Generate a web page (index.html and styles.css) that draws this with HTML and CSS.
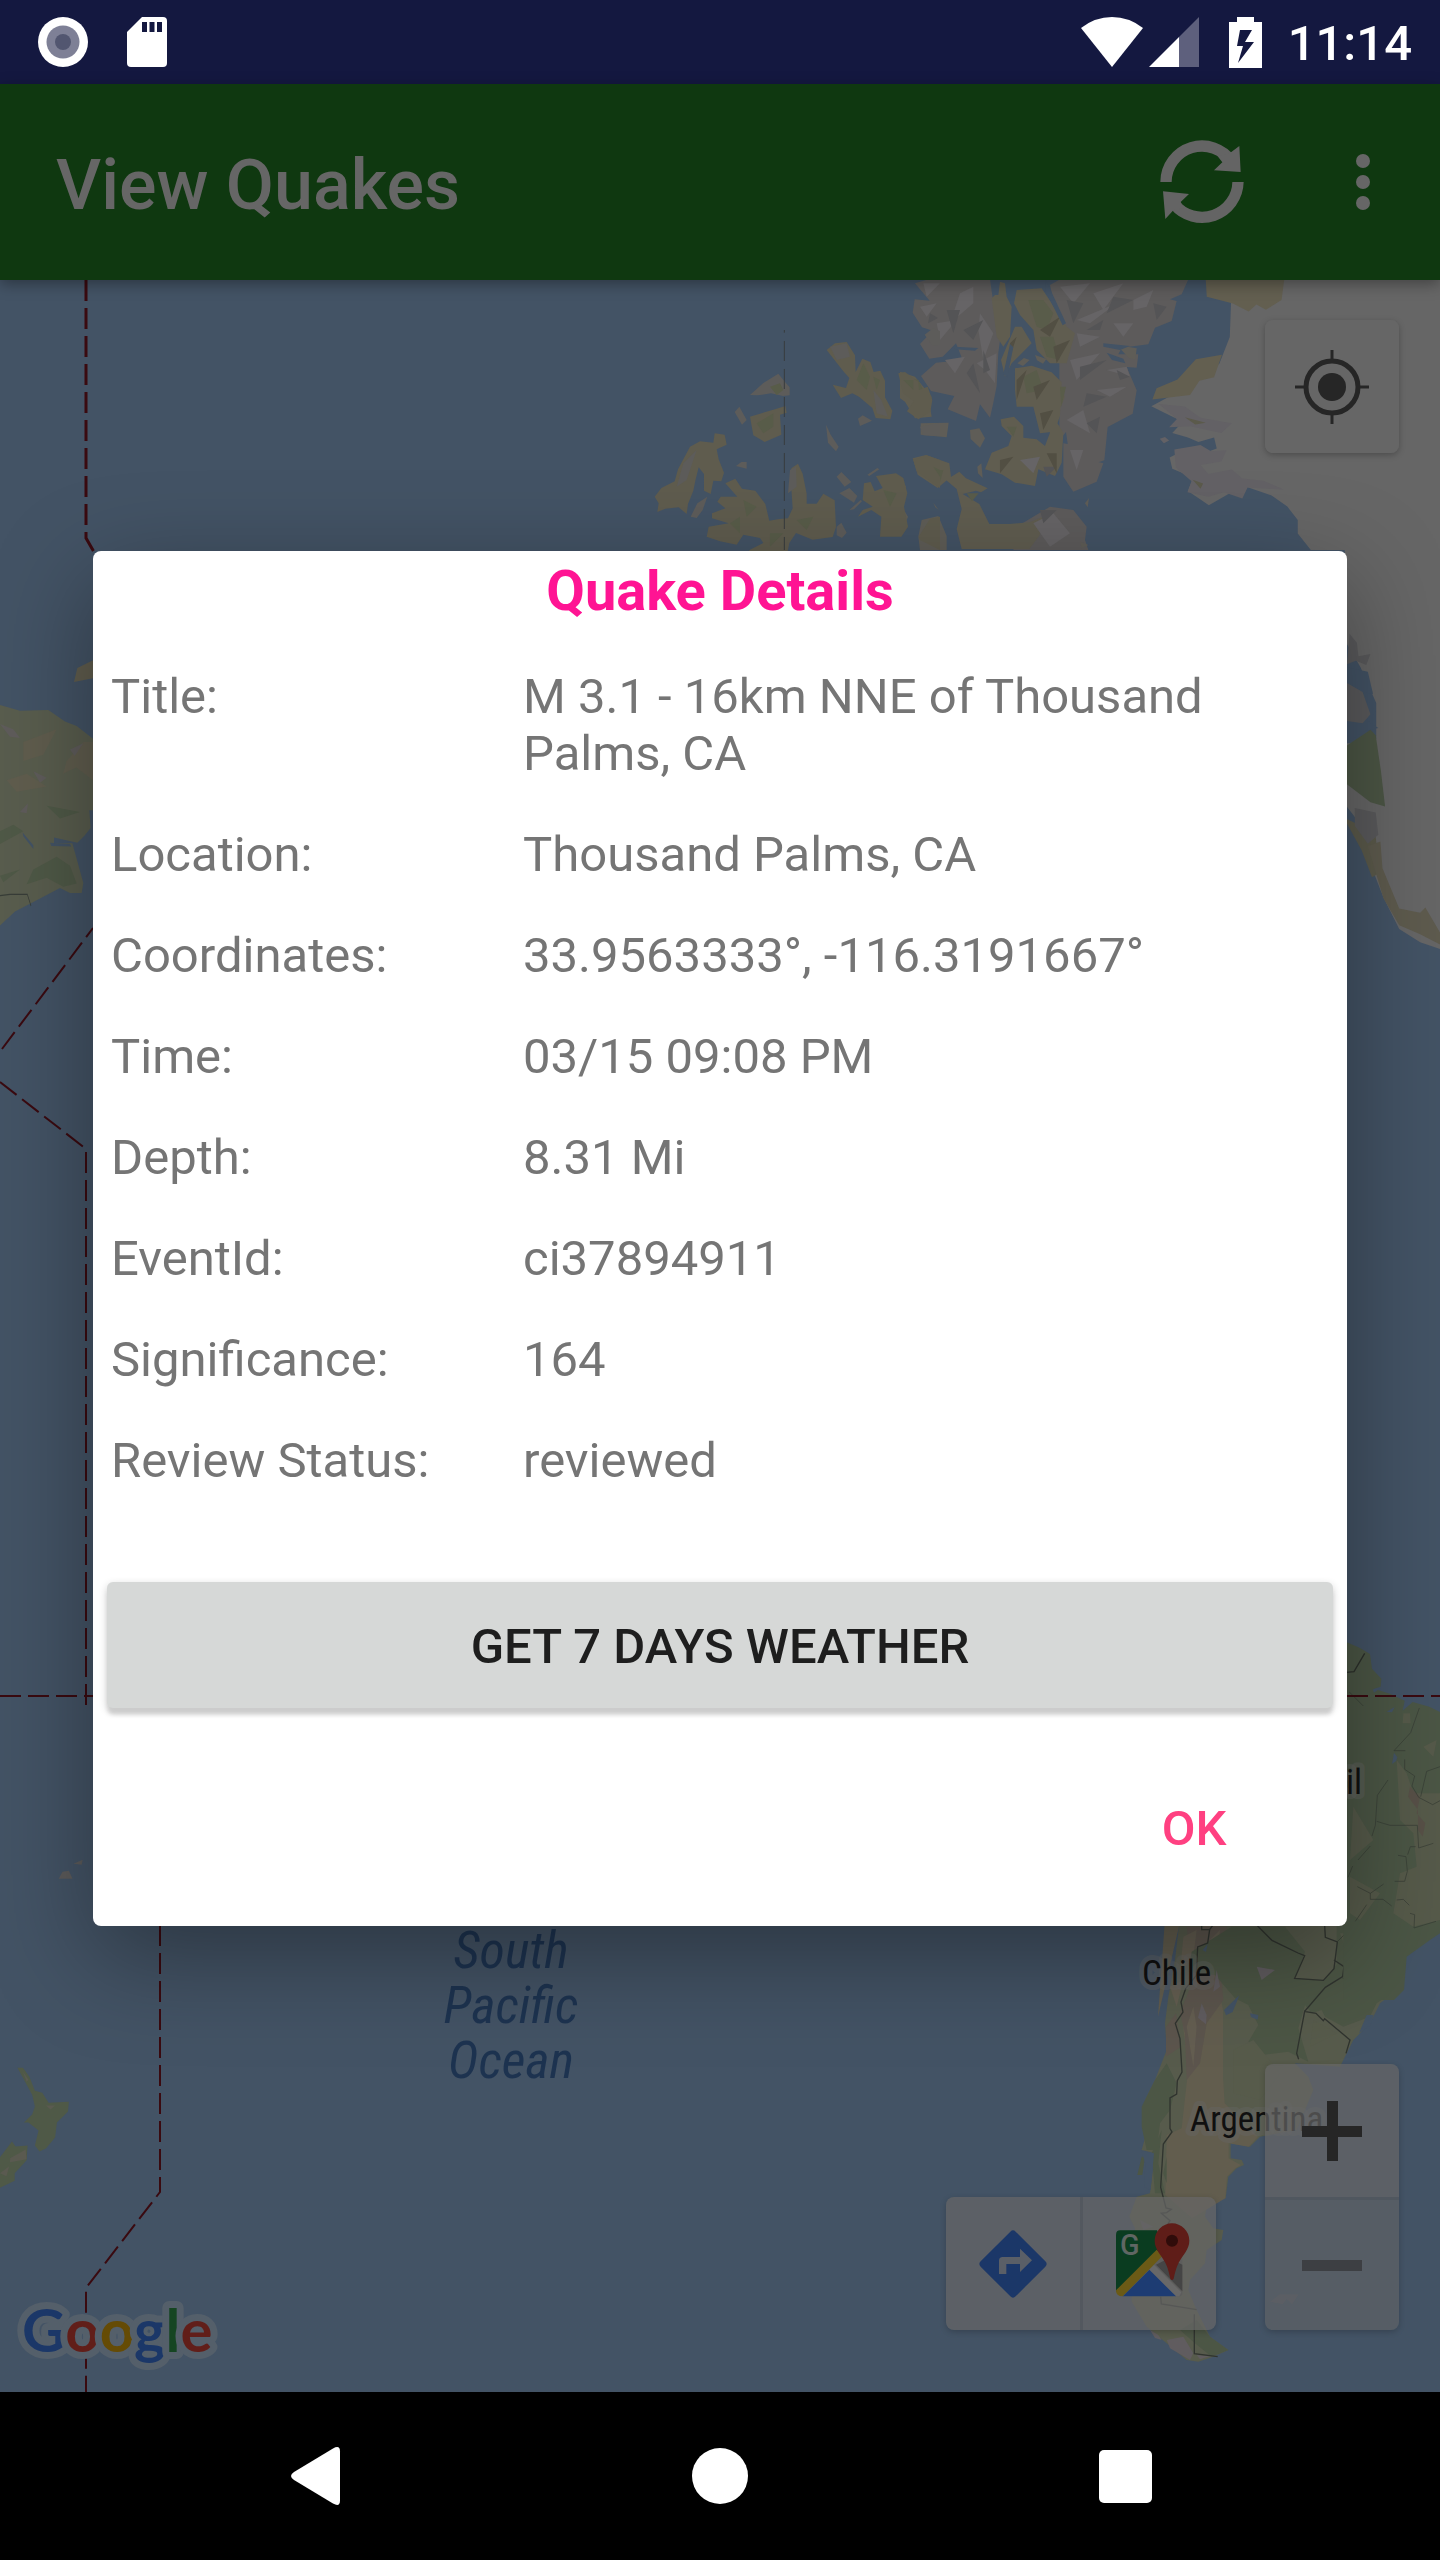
FILE: index.html
```html
<!DOCTYPE html>
<html lang="en">
<head>
<meta charset="utf-8">
<meta name="viewport" content="width=device-width, initial-scale=1">
<title>View Quakes</title>
<link rel="stylesheet" href="styles.css">
</head>
<body>
<div class="status-bar">
  <div class="status-group status-left">
    <svg class="icon-sync" viewBox="0 0 50 50" aria-hidden="true"><circle cx="25" cy="25" r="25" fill="#fff"/><circle cx="25" cy="25" r="16.500" fill="#7e8096"/><circle cx="25" cy="25" r="8" fill="#525670"/></svg>
    <svg class="icon-sd" viewBox="0 0 40 50" aria-hidden="true"><path fill="#fff" d="M15 0h21a4 4 0 0 1 4 4v42a4 4 0 0 1-4 4H4a4 4 0 0 1-4-4V15z"/><path fill="#141840" d="M15 5h5v10h-5zM22.500 5h5v10h-5zM30 5h5v10h-5z"/></svg>
  </div>
  <div class="status-group status-right">
    <svg class="icon-wifi" viewBox="0 0 62 50" aria-hidden="true"><path fill="#fff" d="M0 11Q14 0 31 0t31 11L31 50z"/></svg>
    <svg class="icon-signal" viewBox="0 0 50 50" aria-hidden="true"><path fill="#5e607d" d="M30 20L50 0v50H30z"/><path fill="#fff" d="M0 50l30-30v30z"/></svg>
    <svg class="icon-battery" viewBox="0 0 33 51" aria-hidden="true"><path fill="#fff" d="M8 0h17v5h8v46H0V5h8z"/><path fill="#141840" d="M11 13h12l-7 12h9L9 46l5-17H8z"/></svg>
    <time class="clock">11:14</time>
  </div>
</div>

<div class="screen">
  <header class="app-bar">
    <h1 class="app-title">View Quakes</h1>
    <button class="icon-button" type="button" aria-label="Refresh">
      <svg class="icon-refresh" viewBox="350 412 270 268"><g fill="none" stroke="#646464" stroke-width="34"><path d="M377 546A108 108 0 0 1 574 485"/><path d="M593 546A108 108 0 0 1 402 613"/></g><path fill="#646464" d="M597 438l4 78-80-5 25-24-14-18 40-12zM368 574l78 8-25 24 10 18-32 7-24 26z"/></svg>
    </button>
    <button class="icon-button" type="button" aria-label="More options">
      <svg class="icon-more" viewBox="0 0 14 56"><g fill="#666"><circle cx="7" cy="7" r="7"/><circle cx="7" cy="28" r="7"/><circle cx="7" cy="49" r="7"/></g></svg>
    </button>
  </header>

  <main class="map">
    <svg class="map-canvas" viewBox="0 280 1440 2112" preserveAspectRatio="xMidYMid slice" aria-hidden="true">
      <rect y="280" width="1440" height="2112" fill="#435365"/>

      <!-- Greenland -->
      <g transform="translate(620 270) scale(.52297 .44643)">
        <path fill="#666" d="M1170 20H1570V1522l-40-16-40-30-30-70-20-60-18-40-10-70-26-40V1060h40l20-10v-80l-30-80-30-60V627h-65l-25-37v-30l-20-30-30-25-50-20-30 15-40 27-40-32 10-30-40-20-5-25 20-12 35 7 35-15-5-25-30 10-20-10-30-10 20-25-35-20-25-15 80-50 50-45 20-60z"/>
        <path fill="#635f50" d="M1120 22h150l-5 45-30 22-18-12-15 16-30-18-50-15zM1018 290l8-25 40-20 35-45 50-10-15 50-28 8-18 32z"/>
        <path fill="#636165" d="M1030 300l50 6 30 25 60 12-20 22-60-15-40 2 15-18zM1060 402l50-10 20 14 30-2-10 25-40 8 15 20 45-10 20 20 40 5 40 20-70-5-10 25-35-14-30 10-40-10 8-25-30-30zM1032 378l10-4 8 8-10 6z"/>
        <path fill="#5b5a4b" d="M1080 330l40 12-20 4zM1095 470l20 8-5 12zM1390 1230l35 20 20 20 8 80-15 10-20-60-28-60z"/>
        <path fill="#4c5645" d="M1390 1065l45-35 10 12 10 80 8 80-28-10-45-40z"/>
        <path fill="#5e5b4e" d="M1430 1290l24-10 4 60 32 90 40 10 10-12 30 60v24l-40-24-40-20-30-60z"/>
        <path fill="#435365" d="M1390 890l40 10 10 50-20-5 25 45-15 20 20 16-30 8-30 26z"/>
        <path fill="#5a5a5c" d="M1390 925l30 20 15 50-15 20-30-5zM1395 815l14 20 3 30 23-5-8 25-20-10-17 8zM1405 1205l40 10 5 50-20 20-25-40z"/>
      </g>

      <!-- Ellesmere, Axel Heiberg, Devon -->
      <g transform="translate(900 280) scale(.33333)">
        <path fill="#5d5b5b" d="M45 10l40-12h185l10 70 30 40-15 110-5 100-10 50-10 45-30-40-12 50-85-35 20-40-70-15-30-45 45-40 80-8-20-50-40 40-40 6-28-44 38-40-32-10-28-44 6-40 45 4zM450 15l30-17h385l-20 45-35 15 20 5-15 60-50 20-20 50-80 10-10 20 60 0-5 40-30-2 30 70-12 70-75 40-10 100-60 20-45-35-10-70-20 25 0-300-10-85zM490 490l85 15-5 35 40 10-20 55-70 30-30-45zM350 740l100-60 70 10 40 50-5 40 10 30H340z"/>
        <path fill="#605d50" d="M350 30l75-5 40 60 35 55 25 20-25 90-50 0-40-40-10-60-40-45-18-35zM300 5l15 5 5 40 15 30-5 90-20 30-20-30-15-115 10-10 10 0zM345 140l20 0 30 50-60 60-20 40-12-50zM345 265l50-8 60 20 30 30-5 100-10 30-10 18-40 5-20-80-50 0-5-50zM480 330l15 20-25 60-10 10zM302 418l40-8 28 28 0 35 40 5 25 20 30-80 25 40-5 90-20 40-50-20-10 50-60-10-40-25-50-15 20-50 50-20 10-30-30-30zM38 535l40-10 70 25 5 40-40 34-60-40zM0 275l45 15 50 60-5 30 5 30-50 5-30-50-15-10zM138 600l40-25 20 20 65 30-20 12-15-5-40 10 50 30 30 60 60 0 60-5 50-20-20 60-30 40H185l-15-60 15-60-15-60z"/>
        <path fill="#5f5d57" d="M62 430l84-2-6 44-78-8zM210 450l28-5 17 30-15 28-28-26zM232 560l12-10 4 44-14-14zM55 770l10-50 50-12 25 60 0 42H60zM0 590l18 30-12 60 18 30-24 60zM352 250l20-16 17 6-20 18zM405 225l34 12-10 14-18-10zM555 670l12-16-4 28zM540 785l25 10-20 10zM100 668l16 22-10-8zM650 195l60 10-4 34-20-6z"/>
        <path fill="#595c4a" d="M385 60l45 0 30 40-20 50-30-10zM420 170l40 0 20 70-40-10zM370 290l40-20 20 60-50 10zM5 290l50 10 20 40-40 10zM320 440l30 0-10 30zM90 570l40 0-10 36zM200 640l36 0-20 24zM480 320l18 0-14 60z"/>
        <path fill="#666466" d="M70 10l50 0-40 40zM180 40l40-20 0 50-70 60zM60 80l50-10-30 40zM110 130l60-10-50 60zM240 100l40 60-30 80-15-90zM135 240l60-10-30 50zM230 250l60-30-5 90-30-40zM480 20l90-10-50 60zM580 40l90-30-60 80zM700 60l60-30-20 50-40 10zM530 120l120-50-80 60zM530 160l70 10-60 30zM640 130l60 0-30 40zM510 240l90-20-70 80zM590 330l90-10-50 30zM620 270l60-10 10 30zM500 420l50-30 20 70zM360 540l60-10-20 50zM510 510l40 0-20 60zM400 730l60-30 50 60-60 40z"/>
        <path fill="#545456" d="M140 90l40 0-20 70zM190 150l60-30-30 60zM200 280l20-30 20 90zM250 210l20 60-20 10zM500 60l50 10-30 60zM640 50l60 10-80 40zM560 150l50-30-10 30zM540 260l80-20-80 60zM560 340l60 10-70 30zM650 270l40 20-30 10zM560 430l40-20-10 50zM430 560l40 0-30 30zM760 70l40 10-30 40zM90 100l24 14-30 16zM420 690l50 0-40 40z"/>
        <path fill="#524f43" d="M420 150l60-40-30 60zM460 200l50-20-40 70zM350 300l30-30-30 90zM400 320l50-20-40 60zM420 400l40-10-30 60zM300 540l40-10-40 50zM440 520l30 0 0 60zM330 190l20-20-20 60z"/>
        <path fill="#435365" d="M165 200l70 4-10 8-60-4zM310 282l20-90 10 10-18 90zM438 0l60 130-10 6-50-100zM610 190l80 8-30 12-50-10zM620 218l50 18 6 14-40-10z"/>
      </g>

      <!-- Parry islands -->
      <g transform="translate(640 330) scale(.33333)">
        <path fill="#5f5c4e" d="M150 350l30-16 40 4 4-28 30 4 6 30-30 14 6 30 16 40-8 26-24-2-8 40-20-10 0-50-16-20-10 40-6 30-16 40-4 30-24-20-40 4-24 10 4-26-12-20 20-26 40-20 10-36zM256 460l30-14 20 30 40 6 30 40 12 50 30-5 26-2 14-30-4-60 0-60 20-14 14 30 12 60 0 30 30 0 20-30 34 20 4 80-10 30-60 8-50-20-20 30-10 50H300l30-30 40-20-10-15-50-10-20 30-50-10-40-14 6-30 60-10-50-15 0-15 40-15-24-20 10-15 50 0zM330 260l80-24 26-8 4 20-20 6 4 60-50 22-34-20zM560 60l25-20 35-4 25 40 2 50 20-40 24 10 10 30 20-4 14 30 0 50 22 40-6 26-44-4-10-30-40-34-20-10-34 14-25-40 40 10 10-30-18-20zM775 130l20-4 40 30 2 24 26-10 14 40-6 36-36 22-34-24 20-30-32-24zM820 390l40-14 40 14v84l-30-20-40-30zM836 620l34-54 30-6v100l-60-30zM720 620l4-60-30-20-40 20 14-20 30-10-30-20 4-50 20-4 12 28 24-10-20-36 60-8 22 14 12 46-10 40 12 60-20 30z"/>
        <path fill="#5d5c5a" d="M330 195l40-36 45-28 20 25 14 16 0 24-20 2-36-8-40 6zM284 246l14-16 22 40-14 14zM288 408l16-12h16v20zM590 440l14-14 30 30-20 14zM598 490l30-16 24 24-10 20zM682 434l30-20 6 4-30 20zM628 540l34-30 4 4-24 24zM590 590l14-12 16 30-14 16-16-8zM152 560l20-40 30-20-14 40-18 24zM654 266l14-10 28 16-36 16zM558 284l14 30 24 36-8 14-24-26zM840 290l60-12v40l-50-2zM854 14l26-20 20 10v40l-22 4zM130 400l40-40-30 90-30 20zM570 50l50-10 10 40-40 10zM700 180l24 30 20 50-34-10zM450 420l18-10 2 60-26 20z"/>
        <path fill="#585c49" d="M390 170l30-10 10 20-20 15zM350 280l50-30 0 40-30 20zM650 150l20-50 20 40-10 40zM700 140l20 10-10 30zM790 150l30 0 0 30zM310 510l40 20-30 30zM470 570l50-10-20 40zM730 480l40 10-20 40zM270 580l30-20 0 50zM880 410l20 10v20zM390 610l40 0-40 40z"/>
        <path stroke="#383b3e" stroke-width="3" stroke-dasharray="60 24" d="M433 33V660M433 0v8"/>
      </g>

      <!-- Siberia -->
      <g transform="translate(0 270) scale(.33333 .63776)">
        <path fill="#595d4e" d="M0 682l60 9 85-1 50 18 35 7 49 20v112l-11 0 4 28-20 13-20 10-70-8 0 9 55 0 13 24 20 38-5 16-35 0-30-8-80 22-55 15-45 22z"/>
        <path fill="#605d4e" d="M222 646l10-22 47-12v28zM70 740l100-20-40 40-60 10zM200 770l50-30 29 0v60l-50-20-40 10zM20 800l60-10 60 20-90 8z"/>
        <path fill="#5f5c5b" d="M0 712l40 8 20 14-30-2zM100 786l40 10-20 8zM210 752l40-10-26 20zM60 850l24-14-4 16z"/>
        <path fill="#4f5947" d="M0 880l40-10 30 10-70 20zM100 940l70-20 40 14 20 28-40 5-50-14-60 10zM0 950l60-10-50 20zM140 840l100 10-60 10z"/>
        <path fill="#435365" d="M68 882l32 20 0 6-30-20zM150 898l60 2 4 4-60-1z"/>
        <path fill="none" stroke="#383d38" stroke-width="2" d="M0 981l30-2h52l11 18"/>
      </g>

      <!-- New Zealand and Fiji -->
      <g transform="translate(0 1640) scale(.45918 .49745)">
        <path fill="#4f5947" d="M38 860l12 0 14 18 12 28 16 4 14 20 44-2-2 20-24 22-4 30-20 22-14 6-10-12 8-30-22-16-10 0 18-16 6-16-6-24zM0 1040l26-32 8 10 26-2-2 30-26 26 0 15-34 15z"/>
        <path fill="#5a5a50" d="M22 1042l34-18 2 20-36 6zM0 1072l20-14-6 20zM50 868l12 16-4 4zM100 936l20 0-10 8z"/>
        <path fill="#5b5a5a" d="M128 480l8-14 14-2 8 16zM160 450l20-8-2 10z"/>
      </g>

      <!-- South America, southern half -->
      <g transform="translate(920 1900) scale(.33333)">
        <path fill="#575b4c" d="M778 70L765 180 745 290 735 370 740 450 705 540 675 600 690 660 665 750 705 760 690 880 650 890 628 950 645 985 635 1205 680 1280 740 1330 800 1380 835 1385 880 1370 925 1350 870 1310 830 1230 805 1170 810 1140 855 1090 860 1050 905 1020 910 990 880 985 855 950 860 920 888 898 917 895 925 830 950 805 972 795 965 780 932 775 932 730 990 740 1020 710 1130 690 1180 570 1165 530 1125 490 1260 500 1300 420 1350 370 1380 310 1420 280 1425 180 1440 155 1480 125 1560 92V-10H1270L1280 70z"/>
        <path fill="#625d4e" d="M778 75h75l-20 120-30 90-18 60 20 160-20 180-45 20-4 180 80 70 100-60 5-65 25-25 16-10-36-20 0-45 60 10 28-30-60-60-40-40-5-80V330l-20-110 10-145-70-5-95 0-20 280z"/>
        <path fill="#5c554d" d="M800 80h120l-15 160 5 60-50 70-20 120-40 50-5-140-15-60 40-100zM738 380l30-40 15 100-45 30z"/>
        <path fill="#645e51" d="M790 110l40-20-10 80-40 50zM870 120l30-30-10 100zM800 380l20-60 10 60-10 120zM750 260l40-20-20 80z"/>
        <path fill="#4c5645" d="M935 80h160l60 75-30 80 85 8 40-50V75h300v20l-120 60-10 120-50 35-20 40-80 30-55-30-10-20-30 10-20-25-20 70 30 100-60-30-80 10-40-40 30-50-30-60-40-20-60-70-80-10 10-60zM705 540l35-50 30 60-20 80-30 40-10 80-30 0-15-70 0-60zM725 690l-10 100 20 90-30 0-10-120zM780 1290l50-30 40 50 55 40-50 20-50-40zM665 770l10 0-8 55-15 0zM740 770l0 80-10-30z"/>
        <path fill="#435365" d="M912 330l46-44-20 50-20 10zM990 340l25 5-2 14-20-8zM848 150l15-18-5 24zM1340 345l20 0-8 30-35 25zM664 752l38 8-10 110-20-10 4-70z"/>
        <path fill="#605c5f" d="M845 310l15 35-2 28-24-20zM740 1320l50-10 30 50-10 20-60-35zM1010 200l55 10-40 30zM690 1290l25 15 10 15-20-6zM1350 290l40-10-20 20zM890 210l10 50-20 15zM660 960l40 20-30 10zM830 1365l40 3-30 10z"/>
        <path fill="#575b4b" d="M940 450l60-30 80 100-60 80-80-20zM1180 360l70 40-80 40zM1260 100l130 0 20 90-100 40zM1460 10l80 30-60 50z"/>
        <g fill="none" stroke="#30342f" stroke-width="4">
          <path d="M845 75v14l24 0 10-14M869 89l-6 40-30 12-4 85-32 40-14 40 6 30-23 34 14 46 6 100-14 26-2 40-20 12v92l6 10-26 36-8 130 16 62 16 4-14 10-16 2 26 22-20 32-4 50M722 1190l2 22 106 17M823 1243v118l70 9M1010 75l46 46 78 38 20 8-30 68 86 6 32-35 10-80-36-14-2-36M1242 180l30 20-4 30-52 32-62 72-24 126 6 18M1152 334l36 6 22 22 4-6 76 64-12 40"/>
        </g>
        <path fill="none" stroke="#353b33" stroke-width="2" d="M1252 125l40-40 80 4 20 14 10 40 34 26M1340 14l-36 52M1270 200l50 10M1268 235l58 4M1340 216l36-24 44-2M1330 245l60 32M1470 42l15 2-5 40 76-14"/>
        <path fill="#5d5960" d="M1050 1205l30-22h56l-20 30-16-16-12 16z"/>
      </g>

      <!-- Brazil, east coast -->
      <g transform="translate(1300 1600) scale(.33333)">
        <path fill="#4b5645" d="M130 122l50 22 30 18 6 44 28 30-2 24-20 6 50 16 42 20-6 30 30-26 50 14 40 20 22 32V1000l-30 0-30 20-70 50-8 100-30 30H130z"/>
        <path fill="#565a4a" d="M290 480l30 40 20 60 80 0v380l-80 20-60-40 20-120 50-20-10-100-40-40zM160 620l60 100-70 60zM150 830l90 50-60 80-30-20zM370 440l40-20-10 50zM310 340l20 0 2 30-24 0z"/>
        <path fill="#575047" d="M330 560l30 30-10 50 26 30-8 40-14-20 0-60-30-40z"/>
        <path fill="#435365" d="M282 458l10 14-4 12-12 8zM218 268l24-4-20 14zM260 335l24-14-8 16z"/>
        <path fill="none" stroke="#2c302b" stroke-width="4" d="M140 217l22-2 32-55"/>
        <path fill="none" stroke="#353b34" stroke-width="2" d="M148 276l42 42M358 324l-26 74-50 54 34 0M314 478l0 30 30 20-8 30 20 34 42 22 22-12M420 500l-40 14-18 76M264 540l-32 46-6 90-10 32M230 664l40 12 82 0 4 68 44-14M211 738l-37 42M158 798l-14 34M172 860l39 20 40-28M211 880v18l38 0 26 20M200 914l-34 50M284 844l30 0 8-30-4-44-24-4M347 740l-16 0-8 24M290 900l20-2 18 18M330 940l14 4-2 40 66-20"/>
      </g>

      <!-- date line, equator -->
      <g fill="none" stroke="#3a0a10" stroke-width="2" stroke-dasharray="21 7">
        <path stroke-width="3" d="M86 280v258l8 14"/>
        <path d="M2 1049L93 928M0 1082l86 67v562M0 1696h93M1347 1696h93M160 1925v267l-74 96v104"/>
      </g>

      <g class="ocean-label" text-anchor="middle">
        <text x="511" y="1968">South</text>
        <text x="511" y="2023">Pacific</text>
        <text x="511" y="2078">Ocean</text>
      </g>
      <g class="country-label">
        <text x="1142" y="1985">Chile</text>
        <text x="1190" y="2131">Argentina</text>
        <text x="1362" y="1794" text-anchor="end">Brazil</text>
      </g>
      <text class="google-logo" x="22" y="2352"><tspan fill="#1b3768">G</tspan><tspan fill="#611e19">o</tspan><tspan fill="#654b05">o</tspan><tspan fill="#1b3768">g</tspan><tspan fill="#154522">l</tspan><tspan fill="#611e19">e</tspan></text>
    </svg>

    <button class="map-button locate" type="button" aria-label="My location">
      <svg class="icon-locate" viewBox="0 0 74 74"><g fill="none" stroke="#262626"><circle cx="37" cy="37" r="26" stroke-width="5"/><path stroke-width="3" d="M37 0v11M37 63v11M0 37h11M63 37h11"/></g><circle cx="37" cy="37" r="14" fill="#262626"/></svg>
    </button>

    <div class="map-tools">
      <div class="tool-group tool-row">
        <button class="map-button" type="button" aria-label="Directions">
          <svg class="icon-directions" viewBox="0 0 204 204"><path fill="#1b3768" d="M94 5q8-8 16 0l89 89q8 8 0 16l-89 89q-8 8-16 0L5 110q-8-8 0-16z"/><path fill="#5a5f67" d="M60 132V92q0-11 11-11h52V56l36 35-36 35v-24H82v30z"/></svg>
        </button>
        <button class="map-button" type="button" aria-label="Open in Google Maps">
          <svg class="icon-maps" viewBox="0 0 222 222"><path fill="#5d5d5c" d="M99 140l60-70h29q11 0 11 11v128q0 11-11 11h-10z"/><path fill="#454545" d="M120 125l40-20 39 20v80z"/><path fill="#686868" d="M99 140l15-15 82 83-6 12-20 0z"/><path fill="#1d3c73" d="M20 220l80-80 80 80z"/><path fill="#0a3c20" d="M0 35q0-13 13-13h110l20 50L4 208l-4-5z"/><path fill="#6b5a16" d="M0 202L122 80l18 18L20 220q-20 0-20-18z"/><text x="12" y="97" font-family="Roboto, sans-serif" font-weight="500" font-size="86" fill="#5f6663">G</text><path fill="#5f1d18" d="M168 1a52 52 0 0 1 52 52c0 27-20 42-32 66-8 16-12 34-15 48q-5 8-10 0c-3-14-7-32-15-48-12-24-32-39-32-66A52 52 0 0 1 168 1z"/><circle cx="168" cy="53" r="18" fill="#300c0a"/></svg>
        </button>
      </div>
      <div class="tool-group tool-column">
        <button class="map-button" type="button" aria-label="Zoom in"><svg class="icon-zoom" viewBox="0 0 60 60"><path fill="#262626" d="M25 0h11v25h24v11H36v24H25V36H0V25h25z"/></svg></button>
        <button class="map-button zoom-out" type="button" aria-label="Zoom out"><svg class="icon-zoom" viewBox="0 0 60 60"><path fill="#3d3f43" d="M0 25h60v11H0z"/></svg></button>
      </div>
    </div>
  </main>

  <div class="overlay">
    <section class="dialog" role="dialog" aria-modal="true" aria-labelledby="dialog-title">
      <h2 class="dialog-title" id="dialog-title">Quake Details</h2>
      <table class="details">
        <tbody>
          <tr><th scope="row">Title:</th><td>M 3.1 - 16km NNE of Thousand Palms, CA</td></tr>
          <tr><th scope="row">Location:</th><td>Thousand Palms, CA</td></tr>
          <tr><th scope="row">Coordinates:</th><td>33.9563333°, -116.3191667°</td></tr>
          <tr><th scope="row">Time:</th><td>03/15 09:08 PM</td></tr>
          <tr><th scope="row">Depth:</th><td>8.31 Mi</td></tr>
          <tr><th scope="row">EventId:</th><td>ci37894911</td></tr>
          <tr><th scope="row">Significance:</th><td>164</td></tr>
          <tr><th scope="row">Review Status:</th><td>reviewed</td></tr>
        </tbody>
      </table>
      <button class="weather-button" type="button">GET 7 DAYS WEATHER</button>
      <div class="dialog-actions"><button class="ok-button" type="button">OK</button></div>
    </section>
  </div>
</div>

<nav class="nav-bar" aria-label="System">
  <button class="nav-button" type="button" aria-label="Back"><svg class="icon-nav" viewBox="0 0 58 58"><path fill="#fff" d="M47 1.500q7-4 7 3v49q0 7-7 3L8 33q-6-4 0-8z"/></svg></button>
  <button class="nav-button" type="button" aria-label="Home"><svg class="icon-nav" viewBox="0 0 58 58"><circle cx="29" cy="29" r="28" fill="#fff"/></svg></button>
  <button class="nav-button" type="button" aria-label="Recent apps"><svg class="icon-nav" viewBox="0 0 58 58"><rect x="3" y="3" width="53" height="53" rx="5" fill="#fff"/></svg></button>
</nav>
</body>
</html>
```
FILE: styles.css
```css
* { box-sizing: border-box; }

body {
  margin: 0;
  min-height: 100vh;
  display: flex;
  flex-direction: column;
  background: #000;
  font-family: Roboto, sans-serif;
  font-size: 49px;
  line-height: 57px;
}

button {
  margin: 0;
  padding: 0;
  border: 0;
  background: none;
  font: inherit;
  color: inherit;
  cursor: pointer;
}

svg { display: block; }

.status-bar {
  display: flex;
  justify-content: space-between;
  align-items: center;
  height: 84px;
  padding: 0 28px 0 38px;
  background: #141840;
  color: #fff;
}
.status-group { display: flex; align-items: center; }
.status-left { gap: 39px; }
.icon-sync { width: 50px; height: 50px; }
.icon-sd { width: 40px; height: 50px; }
.icon-wifi { width: 62px; height: 50px; margin-right: 6px; }
.icon-signal { width: 50px; height: 50px; margin-right: 30px; }
.icon-battery { width: 33px; height: 51px; margin-right: 26px; }
.clock { font-weight: 500; padding-top: 2px; }

.screen {
  position: relative;
  flex: 1;
  display: flex;
  flex-direction: column;
}

.app-bar {
  position: relative;
  z-index: 1;
  display: flex;
  align-items: center;
  height: 196px;
  padding: 0 42px 0 56px;
  background: #0f3810;
  color: #666;
  box-shadow: 0 4px 14px rgba(0, 0, 0, .35);
}
.app-title {
  flex: 1;
  margin: 0;
  padding-top: 6px;
  font-size: 70px;
  line-height: 82px;
  font-weight: 500;
}
.icon-button { display: grid; place-items: center; height: 140px; }
.icon-refresh { width: 90px; height: 90px; margin-right: 81px; }
.icon-more { width: 70px; height: 56px; }

.map {
  position: relative;
  flex: 1;
  overflow: hidden;
  background: #435365;
}
.map-canvas { position: absolute; inset: 0; width: 100%; height: 100%; }
.ocean-label {
  font-family: "Roboto Condensed", Roboto, sans-serif;
  font-size: 52px;
  font-style: italic;
  fill: #1d3350;
}
.country-label {
  font-family: "Roboto Condensed", Roboto, sans-serif;
  font-size: 35px;
  fill: #101010;
  stroke: rgba(102, 102, 102, .4);
  stroke-width: 10px;
  stroke-linejoin: round;
  paint-order: stroke;
}
.google-logo {
  font-family: Lato, sans-serif;
  font-size: 60px;
  font-weight: 700;
  stroke: #545f6a;
  stroke-width: 14px;
  stroke-linejoin: round;
  paint-order: stroke;
}

.map-button {
  display: grid;
  place-items: center;
  width: 134px;
  height: 133px;
}
.locate {
  position: absolute;
  top: 40px;
  right: 41px;
  border-radius: 8px;
  background: rgba(102, 102, 102, .7);
  box-shadow: 0 2px 6px rgba(0, 0, 0, .25);
}
.icon-locate { width: 74px; height: 74px; }
.map-tools {
  position: absolute;
  right: 41px;
  bottom: 62px;
  display: flex;
  align-items: flex-end;
  gap: 49px;
}
.tool-group {
  display: flex;
  border-radius: 8px;
  background: rgba(102, 102, 102, .7);
  box-shadow: 0 2px 6px rgba(0, 0, 0, .2);
}
.tool-column { flex-direction: column; }
.tool-row .map-button + .map-button { width: 136px; border-left: 3px solid #53585f; }
.zoom-out { border-top: 3px solid #50575f; background: rgba(67, 83, 101, .25); }
.icon-directions { width: 68px; height: 68px; }
.icon-maps { width: 74px; height: 74px; margin: 0 0 8px 6px; }
.icon-zoom { width: 60px; height: 60px; }

.overlay {
  position: absolute;
  inset: 0;
  z-index: 2;
  display: grid;
  align-items: center;
  padding: 0 93px;
}
.dialog {
  padding: 7px 14px 28px;
  border-radius: 8px;
  background: #fff;
  box-shadow: 0 30px 100px rgba(0, 0, 0, .36);
}
.dialog-title {
  margin: 0 0 22px;
  color: #ff1493;
  font-size: 56px;
  line-height: 66px;
  font-weight: 700;
  text-align: center;
}
.details {
  width: 100%;
  border-collapse: collapse;
  color: #757575;
  text-align: left;
}
.details th,
.details td { padding: 22px 4px; font-weight: 400; vertical-align: top; }
.details th { width: 412px; }
.weather-button {
  display: block;
  width: 100%;
  height: 126px;
  margin-top: 71px;
  border-radius: 6px;
  background: #d6d8d7;
  color: #1e1e1e;
  font-weight: 500;
  padding-top: 4px;
  box-shadow: 0 7px 4px -1px #ccc, 0 3px 8px rgba(0, 0, 0, .2);
}
.dialog-actions {
  display: flex;
  justify-content: flex-end;
  margin-top: 52px;
  padding-right: 52px;
}
.ok-button { width: 174px; height: 138px; color: #ff4081; font-weight: 500; }

.nav-bar {
  display: flex;
  height: 168px;
  padding: 0 112px;
  background: #000;
}
.nav-button { flex: 1; display: grid; place-items: center; }
.icon-nav { width: 58px; height: 58px; }
```
